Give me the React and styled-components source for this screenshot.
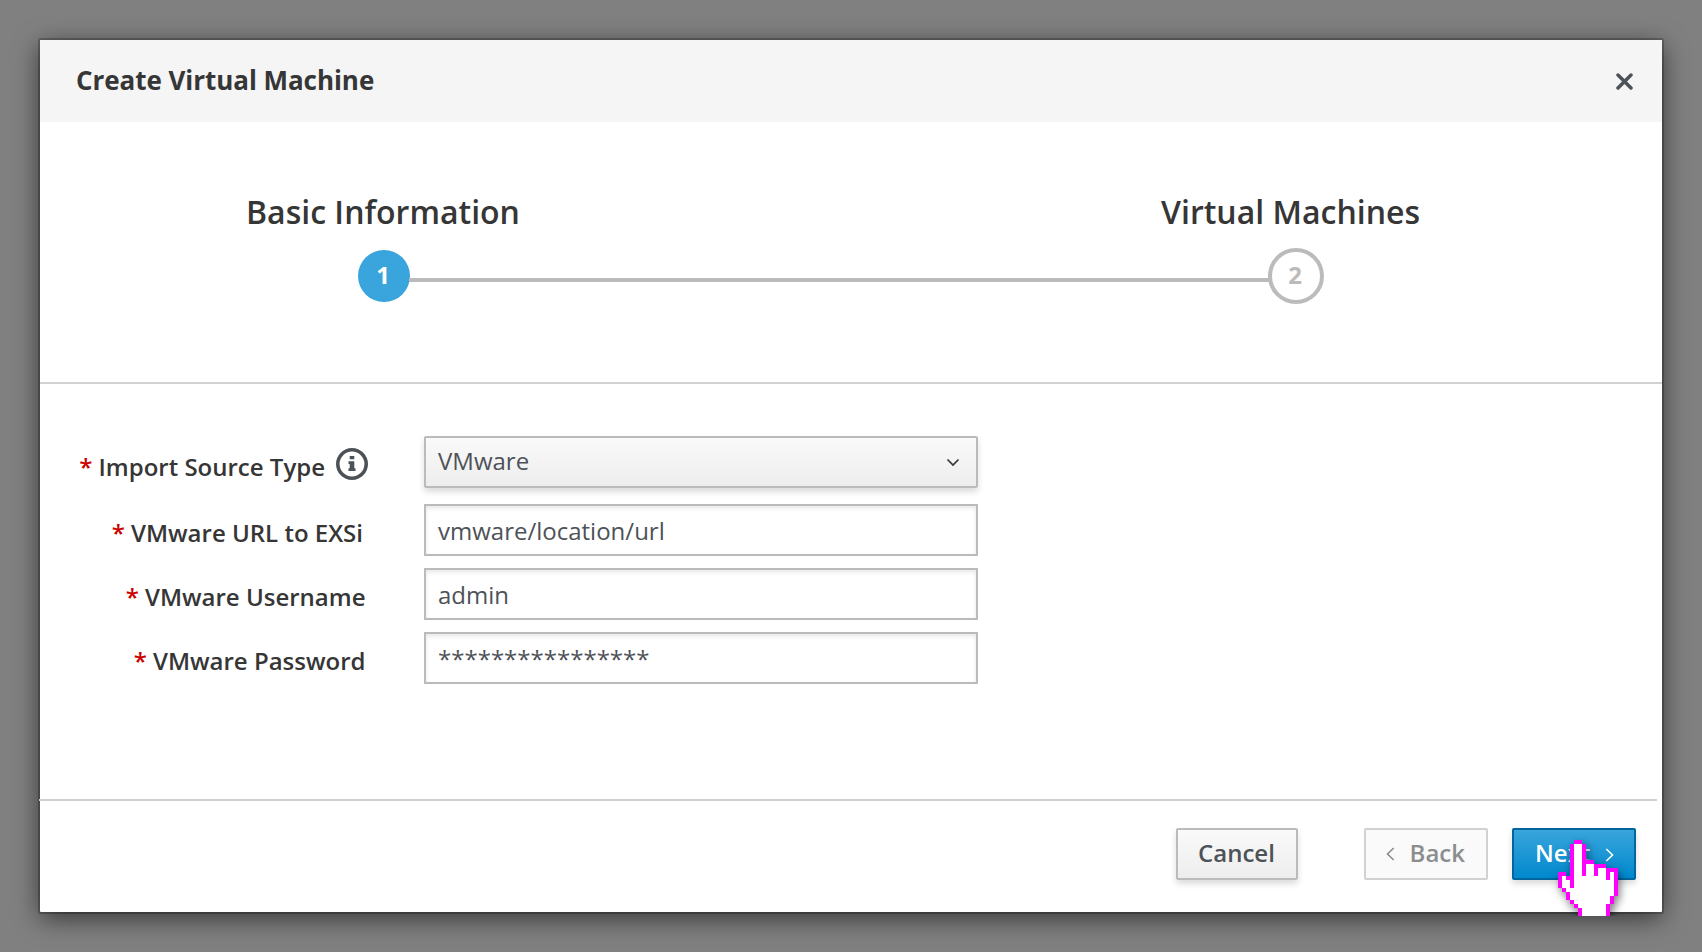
import React from "react";
import styled, { createGlobalStyle, css } from "styled-components";

const Global = createGlobalStyle`
  *, *::before, *::after { box-sizing: border-box; }
  html, body, #root { height: 100%; }
  body {
    margin: 0;
    overflow: hidden;
    background: #808080;
    color: #363636;
    font-family: "Open Sans", "Noto Sans", sans-serif;
    font-size: 24px;
  }
`;

const Backdrop = styled.div`
  height: 952px;
  padding: 40px;
`;

const Dialog = styled.section`
  position: relative;
  display: flex;
  flex-direction: column;
  height: 872px;
  background: #fff;
  border-radius: 1px;
  box-shadow: 0 0 0 2px rgba(0, 0, 0, 0.22), 0 6px 26px rgba(0, 0, 0, 0.6);
`;

const Header = styled.header`
  display: flex;
  align-items: center;
  justify-content: space-between;
  height: 82px;
  padding: 0 29px 0 36px;
  background: #f5f5f5;
`;

const Title = styled.h1`
  margin: 0;
  font-size: 26px;
  font-weight: 700;
  line-height: 80px;
  height: 82px;
  letter-spacing: -0.05px;
`;

const CloseButton = styled.button`
  display: flex;
  padding: 0;
  border: 0;
  background: none;
  color: #4d5258;
`;

const Steps = styled.div`
  height: 262px;
  padding: 67px 0 0;
  border-bottom: 2px solid #d1d1d1;
`;

const StepTitles = styled.div`
  display: flex;
  justify-content: space-between;
  padding: 0 242px 0 206px;
`;

const StepTitle = styled.h2`
  margin: 0;
  font-size: 32px;
  font-weight: 600;
  line-height: 46px;
`;

const Track = styled.div`
  display: flex;
  align-items: center;
  height: 56px;
  margin-top: 13px;
  padding: 0 338px 0 318px;
`;

const StepNumber = styled.span`
  display: flex;
  justify-content: center;
  flex: none;
  font-weight: 700;
  ${(p) =>
    p.$active
      ? css`
          width: 52px;
          height: 52px;
          line-height: 50px;
          padding-right: 2px;
          background: #39a5dc;
          color: #fff;
        `
      : css`
          width: 56px;
          height: 56px;
          line-height: 46px;
          padding-right: 2px;
          border: 4px solid #bbb;
          color: #bbb;
        `}
  border-radius: 50%;
`;

const Connector = styled.span`
  flex: 1;
  height: 4px;
  margin: 8px -1px 0;
  background: #bbb;
`;

const Form = styled.form`
  flex: 1;
  padding-top: 52px;
`;

const FormRow = styled.div`
  display: grid;
  grid-template-columns: 384px 554px;
  height: 52px;
  margin-bottom: ${(p) => p.$gap || 12}px;
`;

const Label = styled.label`
  display: flex;
  justify-content: flex-end;
  padding-right: ${(p) => p.$inset}px;
  padding-top: ${(p) => p.$drop || 0}px;
  font-weight: 600;
  line-height: 57px;
  white-space: pre;
`;

const Required = styled.span`
  margin-right: 6px;
  color: #c00;
`;

const InfoIcon = styled.svg`
  margin: 10px 0 0 11px;
`;

const control = css`
  width: 100%;
  height: 52px;
  border: 2px solid #bbb;
  padding: 0 12px;
  color: #4d5258;
`;

const Select = styled.div`
  ${control}
  display: flex;
  justify-content: space-between;
  padding-right: 16px;
  border-radius: 2px;
  line-height: 45px;
  background: linear-gradient(#fafafa, #ededed);
  box-shadow: 0 4px 6px rgba(3, 3, 3, 0.14);
`;

const Input = styled.div`
  ${control}
  line-height: 49px;
  background: #fff;
  box-shadow: inset 0 2px 4px rgba(3, 3, 3, 0.1);
`;

const Footer = styled.footer`
  display: flex;
  justify-content: flex-end;
  height: 113px;
  margin: 0 5px 0 -1px;
  padding: 27px 21px 0 0;
  border-top: 2px solid #d1d1d1;
`;

const variants = {
  normal: css`
    width: 122px;
    margin-right: 66px;
    border-color: #bbb;
    color: #4d5258;
    background: linear-gradient(#fafafa, #ededed);
    box-shadow: 0 4px 6px rgba(3, 3, 3, 0.14);
  `,
  disabled: css`
    width: 124px;
    margin-right: 24px;
    padding-right: 21px;
    border-color: #d1d1d1;
    color: #8b8d8f;
    background: #fafafa;
  `,
  primary: css`
    width: 124px;
    padding-left: 21px;
    border-color: #00659c;
    color: #fff;
    background: linear-gradient(#39a5dc, #0088ce);
    box-shadow: 0 4px 6px rgba(3, 3, 3, 0.14);
  `,
};

const Button = styled.button`
  display: flex;
  align-items: flex-start;
  justify-content: space-between;
  height: 52px;
  padding: 0 20px;
  border: 2px solid;
  border-radius: 2px;
  font: 600 24px/46px "Open Sans", "Noto Sans", sans-serif;
  ${(p) => variants[p.$variant]}
`;

const Chevron = styled.svg`
  flex: none;
  margin-top: ${(p) => p.$top}px;
`;

const Pointer = styled.div`
  position: absolute;
  left: 1518px;
  top: 800px;
  width: 60px;
  height: 76px;
  clip-path: inset(-20px -20px 0 -20px);
  svg {
    display: block;
    filter: drop-shadow(2px 4px 4px rgba(0, 0, 0, 0.5));
  }
`;

const HAND = [
  "....##.........",
  "...#oo#........",
  "...#oo#........",
  "...#oo#........",
  "...#oo#........",
  "...#oo###......",
  "...#oo#oo###...",
  "...#oo#oo#oo###",
  "##.#oo#oo#oo#o#",
  "#o##oooooooo#o#",
  "#oo#oooooooooo#",
  "#oo#oooooooooo#",
  ".#oooooooooooo#",
  "..#ooooooooooo#",
  "..#oooooooooo#.",
  "...#ooooooooo#.",
  "....#ooooooo#..",
  ".....#oooooo#..",
  ".....#oooooo#..",
];

function Hand() {
  return (
    <Pointer>
      <svg width="60" height="76" viewBox="0 0 15 19" shapeRendering="crispEdges">
        {HAND.flatMap((row, y) =>
          [...row].map((c, x) =>
            c === "." ? null : (
              <rect key={`${x}-${y}`} x={x} y={y} width="1" height="1" fill={c === "#" ? "#ff00ff" : "#fff"} />
            )
          )
        )}
      </svg>
    </Pointer>
  );
}

const fields = [
  { label: "VMware URL to EXSi", value: "vmware/location/url", inset: 61 },
  { label: "VMware Username", value: "admin", inset: 58.5 },
  { label: "VMware Password", value: "****************", inset: 58.5 },
];

export default function App() {
  return (
    <Backdrop>
      <Global />
      <Dialog>
        <Header>
          <Title>Create Virtual Machine</Title>
          <CloseButton aria-label="Close">
            <svg width="17" height="17" viewBox="0 0 17 17" stroke="currentColor" strokeWidth="3.5" strokeLinecap="round">
              <path d="M2 2 15 15M15 2 2 15" />
            </svg>
          </CloseButton>
        </Header>
        <Steps>
          <StepTitles>
            <StepTitle>Basic Information</StepTitle>
            <StepTitle>Virtual Machines</StepTitle>
          </StepTitles>
          <Track>
            <StepNumber $active>1</StepNumber>
            <Connector />
            <StepNumber>2</StepNumber>
          </Track>
        </Steps>
        <Form>
          <FormRow $gap={16}>
            <Label $inset={56} $drop={2}>
              <Required>*</Required>Import Source Type
              <InfoIcon width="32" height="32" viewBox="0 0 32 32" fill="#4d5258">
                <circle cx="16" cy="16" r="14.2" fill="none" stroke="#4d5258" strokeWidth="3.6" />
                <path d="M13.7 8h4.6v3.3h-4.6zM12.5 13.2h5.8v7.1h1.2v2.7h-7v-2.7h1.2v-4.4h-1.2z" />
              </InfoIcon>
            </Label>
            <Select>
              VMware
              <Chevron $top={20} width="14" height="9" viewBox="0 0 14 9" fill="none" stroke="#363636" strokeWidth="1.7">
                <path d="M1.5 1.5 7 7l5.5-5.5" />
              </Chevron>
            </Select>
          </FormRow>
          {fields.map((f) => (
            <FormRow key={f.label}>
              <Label $inset={f.inset}>
                <Required>*</Required>
                {f.label}
              </Label>
              <Input>{f.value}</Input>
            </FormRow>
          ))}
        </Form>
        <Footer>
          <Button $variant="normal">Cancel</Button>
          <Button $variant="disabled">
            <Chevron $top={17} width="9" height="14" viewBox="0 0 9 14" fill="none" stroke="currentColor" strokeWidth="1.6">
              <path d="M7.7 1 1.5 7l6.2 6" />
            </Chevron>
            Back
          </Button>
          <Button $variant="primary">
            Next
            <Chevron $top={18} width="9" height="14" viewBox="0 0 9 14" fill="none" stroke="currentColor" strokeWidth="1.6">
              <path d="M1.3 1l6.2 6-6.2 6" />
            </Chevron>
          </Button>
        </Footer>
        <Hand />
      </Dialog>
    </Backdrop>
  );
}
